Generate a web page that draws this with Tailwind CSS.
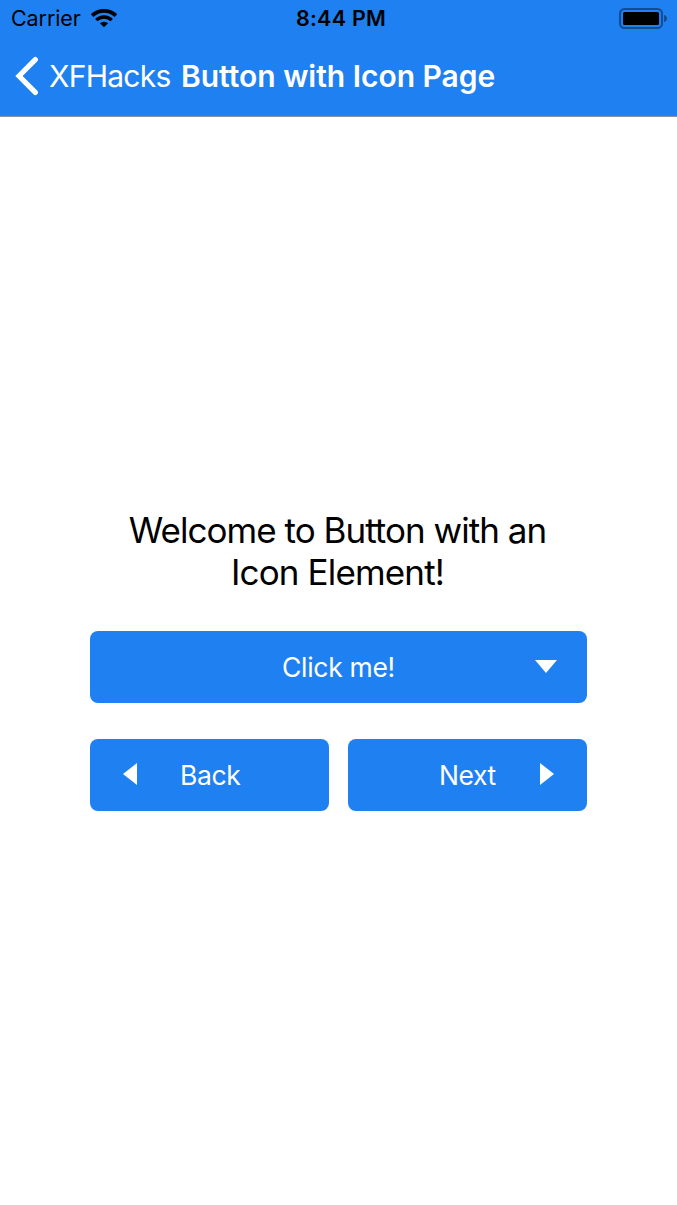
<!DOCTYPE html>
<html lang="en">
<head>
<meta charset="utf-8">
<title>Button with Icon Page</title>
<script src="https://cdn.jsdelivr.net/npm/@tailwindcss/browser@4"></script>
</head>
<body class="h-[1205px] w-[677px] overflow-hidden bg-white font-['Inter',sans-serif] antialiased">
<header class="h-[117px] border-b border-[#8a949f] bg-[#1f80f2]">
  <div class="flex h-9 items-center text-[21.5px] leading-9 text-black">
    <div class="flex w-[296px] items-center pl-[11px]">
      <span class="w-[70px] whitespace-nowrap tracking-[-0.1px]">Carrier</span>
      <svg class="ml-[10px] h-[18px] w-[26px]" viewBox="0 0 26 18" fill="none" stroke="#000">
        <path d="M1.1 6.7a17 17 0 0 1 23.800 0" stroke-width="3.800"/>
        <path d="M5.300 11.200a10.900 10.900 0 0 1 15.400 0" stroke-width="3.300"/>
        <path d="M13 18.200 8.800 14.300q4.200-3.300 8.400 0z" fill="#000" stroke="none"/>
      </svg>
    </div>
    <span class="whitespace-nowrap font-semibold tracking-[0.250px]">8:44 PM</span>
    <svg class="ml-auto mr-[9px] h-[21px] w-[49px]" viewBox="0 0 49 21">
      <rect x="1" y="1" width="42" height="19" rx="4.500" fill="none" stroke="#134c91" stroke-width="2"/>
      <rect x="4" y="4" width="36" height="13" rx="1.500"/>
      <path d="M45 7q3 1 3 3.500t-3 3.500z" fill="#134c91"/>
    </svg>
  </div>
  <nav class="flex h-20 items-center text-[30px] leading-20 text-white">
    <svg class="ml-[15px] h-10 w-6" viewBox="0 0 24 40" fill="none" stroke="#fff" stroke-width="5.200" stroke-linecap="round"><path d="M20.300 3.600 4 20 20.300 36.400" stroke-linejoin="miter"/></svg>
    <span class="ml-[10px] w-[132px] whitespace-nowrap font-normal tracking-[-0.750px]">XFHacks</span>
    <span class="whitespace-nowrap font-semibold tracking-[-0.020px]">Button with Icon Page</span>
  </nav>
</header>
<main class="mx-auto mt-[392px] w-[497px]">
  <h1 class="-ml-[2px] text-center text-[35px] leading-[42px] tracking-[-0.970px] text-black">Welcome to Button with an<br><span class="tracking-[-0.850px]">Icon Element!</span></h1>
  <div class="mt-[38px] grid grid-cols-2 gap-x-[19px] gap-y-[36px] text-[26.5px] font-normal text-white">
    <button class="col-span-2 flex h-[72px] items-center rounded-lg bg-[#1f80f2]">
      <span class="ml-[192px] whitespace-nowrap pt-px tracking-[-0.300px]">Click me!</span>
      <svg class="mb-px ml-auto mr-[30px] h-[13px] w-[22px]" viewBox="0 0 22 13"><path d="M0 0H22L11 13Z" fill="#fff"/></svg>
    </button>
    <button class="flex h-[72px] items-center rounded-lg bg-[#1f80f2]">
      <svg class="mb-[2px] ml-[33px] h-[22px] w-[14px]" viewBox="0 0 14 22"><path d="M14 0V22L0 11Z" fill="#fff"/></svg>
      <span class="ml-[43px] whitespace-nowrap pt-[2px] tracking-[-0.350px]">Back</span>
    </button>
    <button class="flex h-[72px] items-center rounded-lg bg-[#1f80f2]">
      <span class="ml-[91px] whitespace-nowrap pt-[2px] tracking-[-0.400px]">Next</span>
      <svg class="mb-[2px] ml-auto mr-[33px] h-[22px] w-[14px]" viewBox="0 0 14 22"><path d="M0 0V22L14 11Z" fill="#fff"/></svg>
    </button>
  </div>
</main>
</body>
</html>
